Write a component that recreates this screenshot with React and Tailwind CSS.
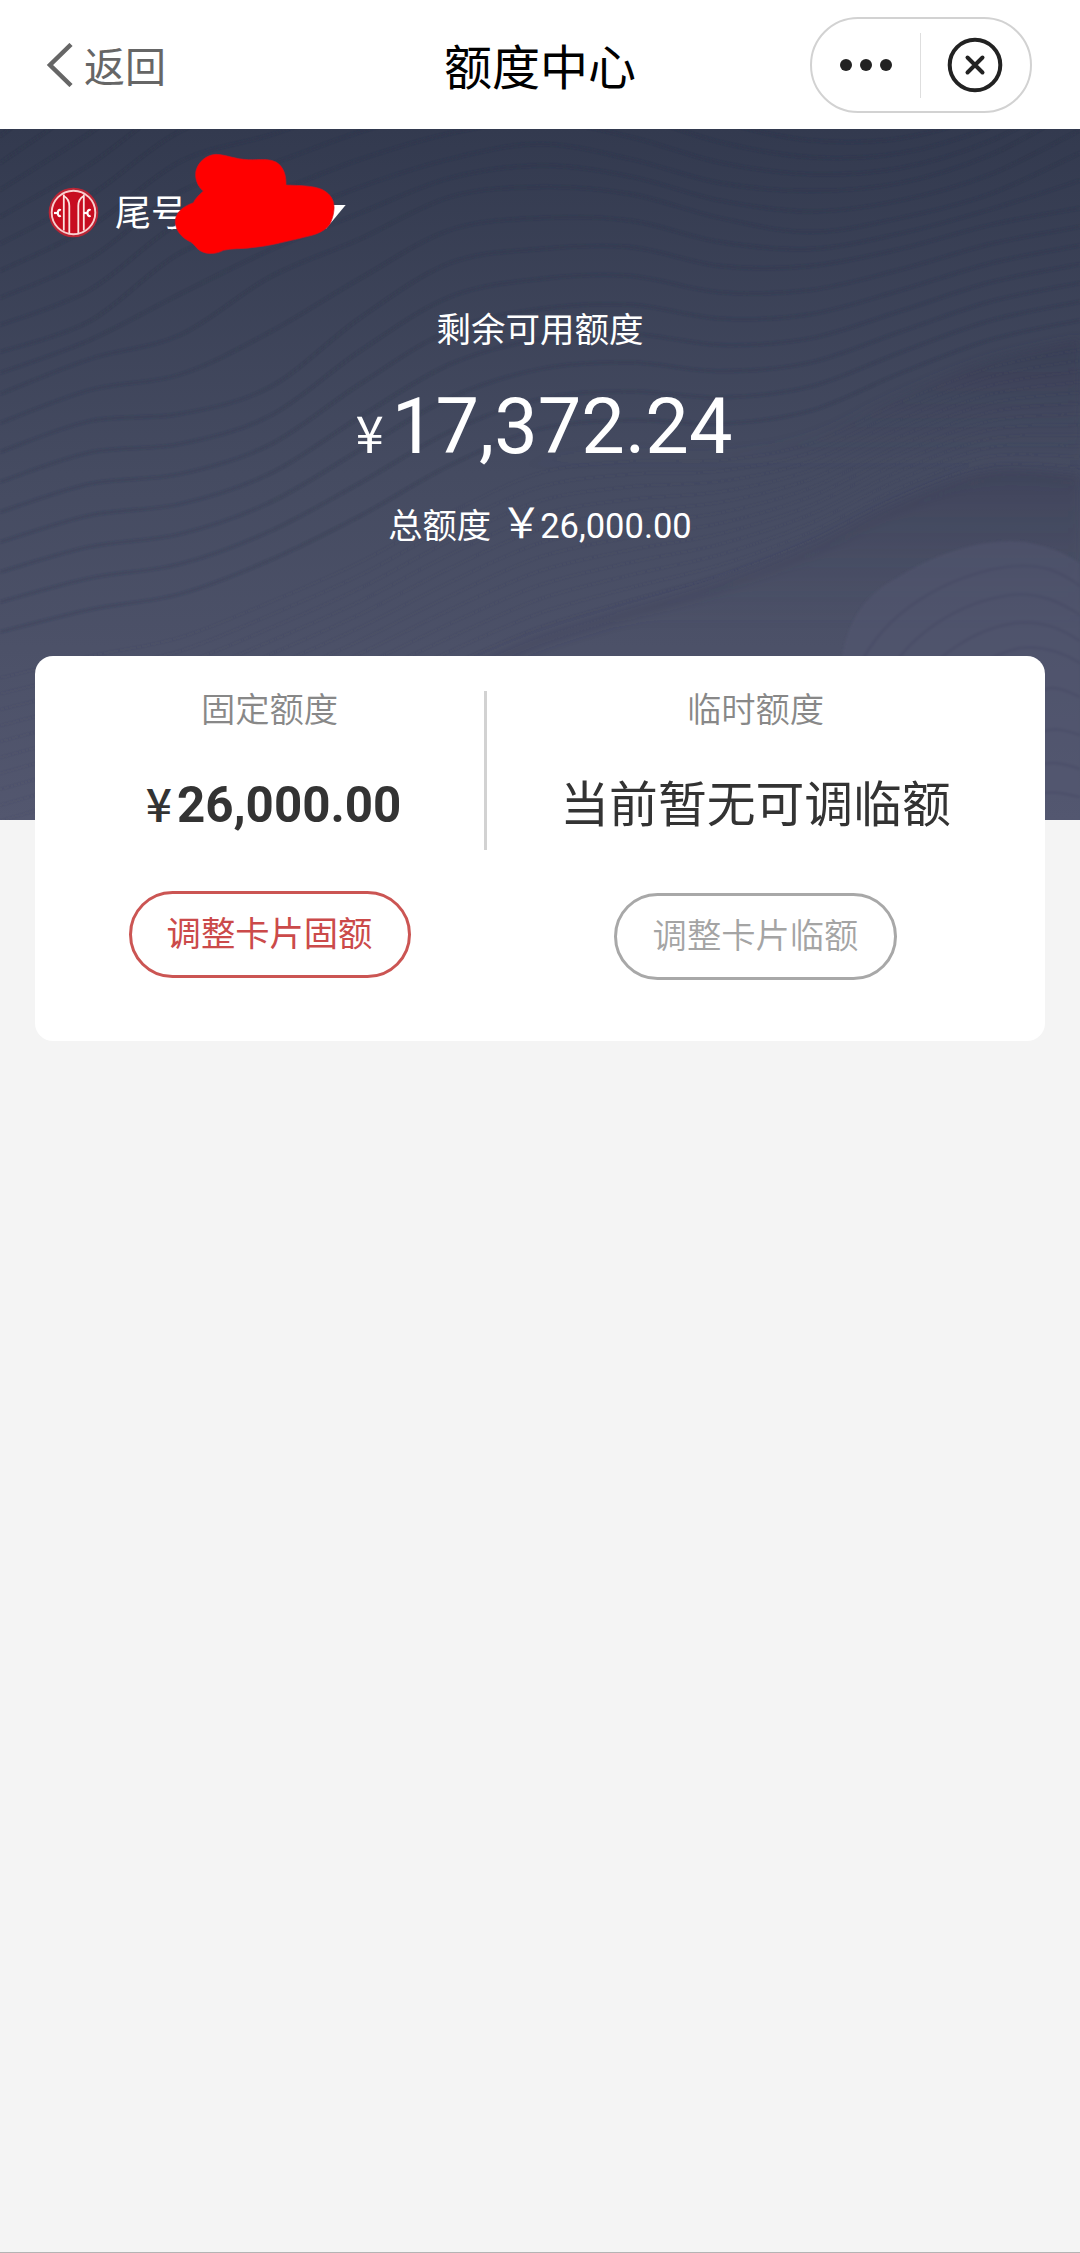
// ── wave backdrop ─────────────────────────────────────────────────────────────
// heights sampled every 90px across the banner
const waveKeys = [
  [-20, -90, -150, -170, -190, -200, -190, -170, -130, -90, -80, -100, -140],
  [223, 192, 124, 94, 58, 30, 15, 30, 54, 62, 54, 26, -22],
  [265, 230, 206, 148, 110, 68, 58, 65, 89, 103, 89, 65, 24],
  [323, 292, 285, 258, 189, 134, 120, 118, 137, 137, 120, 96, 79],
  [533, 512, 495, 460, 420, 370, 330, 320, 321, 306, 265, 230, 210],
]
const waveSteps = [9, 2, 2, 7]

const ridge = [740, 710, 670, 630, 590, 550, 512, 484, 457, 421, 376, 345, 349]

function smoothPath(ys) {
  const pts = ys.map((y, i) => [i * 90, y])
  let d = `M${pts[0][0]} ${pts[0][1]}`
  for (let i = 0; i < pts.length - 1; i++) {
    const p0 = pts[i - 1] || pts[i]
    const p1 = pts[i]
    const p2 = pts[i + 1]
    const p3 = pts[i + 2] || p2
    d += ` C${p1[0] + (p2[0] - p0[0]) / 6} ${p1[1] + (p2[1] - p0[1]) / 6} ${p2[0] - (p3[0] - p1[0]) / 6} ${p2[1] - (p3[1] - p1[1]) / 6} ${p2[0]} ${p2[1]}`
  }
  return d
}

function mix(a, b, t) {
  return a.map((y, i) => y + (b[i] - y) * t)
}

const waveLines = waveSteps.flatMap((steps, k) =>
  Array.from({ length: steps }, (_, i) => smoothPath(mix(waveKeys[k], waveKeys[k + 1], i / steps)))
)
const fineLines = Array.from({ length: 12 }, (_, i) => smoothPath(mix(waveKeys[4], ridge, (i + 1) / 13)))
const close = ' L1080 760 L0 760 Z'

const hillPath = 'M838 560 C842 500 858 470 895 450 C940 420 1000 405 1035 415 C1060 421 1070 428 1080 434 V700 H838 Z'
const hillLines = [
  'M858 540 C885 480 950 447 1005 438 C1040 433 1060 442 1080 457',
  'M880 560 C905 505 960 473 1010 466 C1040 463 1060 473 1080 486',
  'M905 570 C935 525 975 500 1015 494 C1042 491 1062 500 1080 512',
  'M935 575 C960 545 990 525 1020 519 C1045 516 1064 524 1080 534',
  'M1030 575 C1045 550 1062 560 1080 568',
  'M1030 610 C1048 596 1062 600 1080 606',
  'M1030 640 C1048 630 1062 634 1080 640',
  'M1030 668 C1048 660 1062 664 1080 668',
]

function Waves() {
  return (
    <svg className="absolute inset-0 h-full w-full" viewBox="0 0 1080 691" preserveAspectRatio="none" fill="none">
      <defs>
        <linearGradient id="band" gradientUnits="userSpaceOnUse" x1="0" y1="210" x2="0" y2="340">
          <stop offset="0" stopColor="#363950" stopOpacity="0.5" />
          <stop offset="1" stopColor="#454a60" stopOpacity="0" />
        </linearGradient>
        <linearGradient id="ridge" gradientUnits="userSpaceOnUse" x1="0" y1="345" x2="0" y2="500">
          <stop offset="0" stopColor="#393c54" stopOpacity="0.4" />
          <stop offset="1" stopColor="#474b61" stopOpacity="0" />
        </linearGradient>
        <filter id="soft" x="-5%" y="-5%" width="110%" height="110%">
          <feGaussianBlur stdDeviation="1.3" />
        </filter>
        <filter id="haze" x="-5%" y="-5%" width="110%" height="110%">
          <feGaussianBlur stdDeviation="5" />
        </filter>
      </defs>
      <g filter="url(#haze)">
        <path d={smoothPath(waveKeys[4]) + close} fill="url(#band)" />
        <path d={smoothPath(ridge) + close} fill="url(#ridge)" />
        <path d={smoothPath(ridge)} stroke="#393c54" strokeOpacity="0.22" strokeWidth="12" />
      </g>
      <g filter="url(#soft)">
        {waveLines.map(d => (
          <path key={d} d={d} stroke="#292e45" strokeOpacity="0.25" strokeWidth="2.8" />
        ))}
        {fineLines.map(d => (
          <path key={d} d={d} stroke="#3a3e58" strokeOpacity="0.1" strokeWidth="2" />
        ))}
        <path d={hillPath} fill="#51566f" fillOpacity="0.5" />
        {hillLines.map(d => (
          <path key={d} d={d} stroke="#3f4460" strokeOpacity="0.28" strokeWidth="3" />
        ))}
      </g>
    </svg>
  )
}

// ── icons ─────────────────────────────────────────────────────────────────────
function BankLogo() {
  return (
    <svg className="h-[52px] w-[52px] shrink-0" viewBox="0 0 52 52" fill="none">
      <circle cx="25.5" cy="25.5" r="24.8" fill="#b92535" />
      <circle cx="25.5" cy="25.5" r="21.8" fill="#c70d20" stroke="#f9cfcf" strokeWidth="1.9" />
      <g stroke="#fbe3e0" strokeWidth="1.8">
        <path d="M15.8 7.5 V43.5" />
        <path d="M35.8 7.5 V43.5" />
        <path d="M15.8 9 C19.5 11 21.3 14 21.3 19 V46.5" />
        <path d="M35.8 9 C32 11 30.3 14 30.3 19 V46.5" />
      </g>
      <g stroke="#fff" strokeWidth="2.2">
        <path d="M12.8 23.2 C8.8 21.2 8.8 30.8 12.8 28.8" />
        <path d="M42.6 23.2 C38.4 21.2 38.4 30.8 42.6 28.8" />
        <path d="M6 26 H10" />
        <path d="M36 26 H39.5" />
      </g>
    </svg>
  )
}

function Scribble() {
  return (
    <svg className="absolute top-[11px] left-[30px] h-[130px] w-[340px]" viewBox="0 0 1020 390">
      <path d="M830 195 H947 L888 266 Z" fill="#fff" />
      <path
        d="M558 43 C590 44 615 58 655 59 C690 60 715 55 738 66 C762 80 769 108 768 135 C810 137 845 136 875 148 C905 162 914 185 912 208 C910 230 905 240 900 252 C880 282 840 287 810 295 C765 305 715 319 665 323 C635 327 605 325 580 331 C560 343 530 344 510 332 C498 325 495 314 482 306 C460 296 440 278 436 250 C434 222 452 202 490 188 C497 174 508 164 520 153 C500 137 494 112 498 92 C505 65 530 44 558 43 Z"
        fill="#ff0000"
        stroke="#d5101c"
        strokeWidth="2"
      />
    </svg>
  )
}

function Capsule() {
  return (
    <div className="mt-px flex h-24 w-[222px] items-center rounded-full border-2 border-[#d2d2d2]">
      <div className="flex w-[108px] items-center justify-center gap-2">
        <span className="h-3 w-3 rounded-full bg-[#222]" />
        <span className="h-3 w-3 rounded-full bg-[#222]" />
        <span className="h-3 w-3 rounded-full bg-[#222]" />
      </div>
      <div className="h-[65px] w-px bg-[#dedede]" />
      <div className="flex flex-1 justify-center pr-0.5">
        <svg className="h-14 w-14" viewBox="0 0 56 56" fill="none" stroke="#222" strokeWidth="4">
          <circle cx="28" cy="28" r="25.3" />
          <path d="M20.5 20.5 L35.5 35.5 M35.5 20.5 L20.5 35.5" strokeLinecap="round" />
        </svg>
      </div>
    </div>
  )
}

// ── sections ──────────────────────────────────────────────────────────────────
function Header() {
  return (
    <header className="flex h-[129px] items-center bg-white pr-12 pl-[46px]">
      <div className="flex flex-1 items-center text-[#666]">
        <svg className="mt-px h-11 w-7" viewBox="0 0 28 44" fill="none" stroke="currentColor" strokeWidth="4.5">
          <path d="M25 1.5 L4 22 L25 42.5" />
        </svg>
        <span className="mt-2 ml-2.5 text-[41px] leading-none">返回</span>
      </div>
      <h1 className="mt-2 pl-0.5 text-[48px] leading-none text-black">额度中心</h1>
      <div className="flex flex-1 justify-end">
        <Capsule />
      </div>
    </header>
  )
}

function Column({ title, children, action }) {
  return (
    <div className="flex flex-1 flex-col items-center">
      <div className="mt-[3px] h-[34px] text-[34.3px] leading-[34px] font-[350] text-[#888]">{title}</div>
      {children}
      {action}
    </div>
  )
}

export default function App() {
  return (
    <div className="flex h-[2253px] w-[1080px] flex-col overflow-hidden border-b border-[#b4b4b4] bg-[#f4f4f4] font-['Roboto','Noto_Sans_CJK_SC',sans-serif]">
      <Header />

      <section className="relative h-[691px] shrink-0 bg-linear-to-b from-[#333a4f] via-[#454b61] to-[#53576f]">
        <Waves />
        <div className="relative flex flex-col text-white">
          <div className="flex h-[168px] items-center pl-12">
            <BankLogo />
            <span className="mt-0.5 ml-[15px] text-[36px] leading-none">尾号</span>
          </div>
          <div className="mt-4 text-center text-[34.5px] leading-[34px]">剩余可用额度</div>
          <div className="mt-10 flex h-20 items-baseline justify-center pl-2 leading-[80px]">
            <span className="mr-2 font-['Noto_Sans_CJK_SC',sans-serif] text-[51px]">¥</span>
            <span className="text-[77.5px]">17,372.24</span>
          </div>
          <div className="mt-[37px] flex items-baseline justify-center leading-10">
            <span className="text-[34.3px]">总额度</span>
            <span className="ml-[9px] text-[42px]">￥</span>
            <span className="-ml-0.5 text-[34.5px]">26,000.00</span>
          </div>
        </div>
        <Scribble />
      </section>

      <main className="relative mx-[35px] -mt-[164px] flex h-[385px] shrink-0 rounded-[18px] bg-white pt-[34px] pr-[21px] pl-5">
        <Column
          title="固定额度"
          action={
            <button className="mt-[64px] h-[87px] w-[282px] rounded-full border-3 border-[#cb5553] text-[34.3px] leading-none text-[#cb4a4a]">
              调整卡片固额
            </button>
          }
        >
          <div className="mt-[50px] flex h-[50px] items-baseline pl-2 leading-[50px] font-bold text-[#333]">
            <span className="mr-[5px] font-['Noto_Sans_CJK_SC',sans-serif] text-[46px] font-medium">¥</span>
            <span className="text-[49.3px]">26,000.00</span>
          </div>
        </Column>
        <div className="mt-px h-[159px] w-[3px] bg-[#d2d2d2]" />
        <div className="flex w-[537px]">
          <Column
            title="临时额度"
            action={
              <button className="mt-[62px] h-[87px] w-[283px] rounded-full border-3 border-[#a8a8a8] text-[34.3px] leading-none font-[350] text-[#a4a4a4]">
                调整卡片临额
              </button>
            }
          >
            <div className="mt-[54px] h-[50px] text-[48.8px] leading-[50px] text-[#333]">当前暂无可调临额</div>
          </Column>
        </div>
      </main>
    </div>
  )
}
